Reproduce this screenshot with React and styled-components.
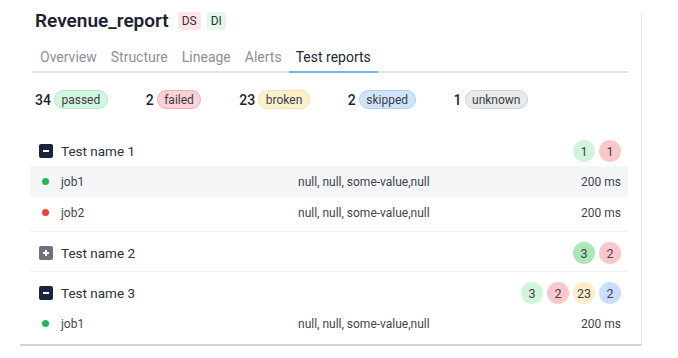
import React from "react";
import styled, { createGlobalStyle } from "styled-components";

const GlobalStyle = createGlobalStyle`
  body {
    margin: 0;
    background: #ffffff;
    font-family: Roboto, "Liberation Sans", sans-serif;
  }
`;

const Card = styled.div`
  box-sizing: border-box;
  width: 622px;
  margin: 12px 0 0 20px;
  padding: 0 13px 2px 10px;
  background: #fff;
  border-right: 1px solid #ececed;
  border-bottom: 2px solid #d3d4d6;
`;

const TitleRow = styled.div`
  display: flex;
  align-items: center;
  height: 18px;
  padding-left: 5px;
`;

const Title = styled.h1`
  margin: 0 9px 0 0;
  font-size: 19px;
  line-height: 18px;
  font-weight: 600;
  color: #1d2233;
`;

const Tag = styled.span`
  display: inline-flex;
  align-items: center;
  justify-content: center;
  height: 18px;
  padding: 0 4px;
  margin-right: 6px;
  border-radius: 3px;
  font-size: 12px;
  color: ${({ tone }) => (tone === "red" ? "#4a2a30" : "#26362d")};
  background: ${({ tone }) => (tone === "red" ? "#fde5e8" : "#e4f6ea")};
`;

const Tabs = styled.div`
  display: flex;
  margin: 12px 0 0 2px;
  border-bottom: 2px solid #e3e4e7;
`;

const Tab = styled.div`
  padding: 5px 7px 4px;
  font-size: 14px;
  line-height: 20px;
  color: ${({ active }) => (active ? "#222633" : "#8c909a")};
  border-bottom: 2px solid ${({ active }) => (active ? "#79b3ec" : "transparent")};
  margin-bottom: -2px;

  &:first-child {
    padding-left: 8px;
  }
`;

const Stats = styled.div`
  display: flex;
  gap: 38px;
  margin-top: 17px;
  padding-left: 5px;
`;

const Stat = styled.div`
  display: flex;
  align-items: center;
  gap: 3px;
`;

const StatNum = styled.span`
  font-size: 14px;
  font-weight: 500;
  color: #1f2435;
`;

const pill = {
  passed: ["#d3f5de", "#b4e9c4"],
  failed: ["#fcd2d5", "#f3aab0"],
  broken: ["#fdf0cc", "#f6e1a8"],
  skipped: ["#cfe4fb", "#add0f4"],
  unknown: ["#e9eaec", "#cfd1d5"],
};

const Pill = styled.span`
  box-sizing: border-box;
  height: 19px;
  padding: 0 6.5px;
  display: inline-flex;
  align-items: center;
  border-radius: 10px;
  font-size: 12px;
  color: #3a3e46;
  background: ${({ kind }) => pill[kind][0]};
  border: 1px solid ${({ kind }) => pill[kind][1]};
`;

const Groups = styled.div`
  margin-top: 27px;
`;

const Group = styled.div`
  padding-bottom: 3px;
  margin-bottom: 6px;
  border-bottom: 1px solid #eef0f2;

  &:last-child {
    border-bottom: 0;
    margin-bottom: 0;
  }
`;

const GroupHeader = styled.div`
  display: flex;
  align-items: center;
  height: 30px;
  padding: 0 7px 0 9px;
`;

const GroupName = styled.span`
  flex: 1;
  margin-left: 8px;
  font-size: 13.5px;
  color: #2b303b;
`;

const Counts = styled.div`
  display: flex;
  gap: 4px;
`;

const count = {
  green: "#d3f4dc",
  greenStrong: "#a9e7b7",
  red: "#fcc7cb",
  yellow: "#fdeec9",
  blue: "#c9defa",
};

const Count = styled.span`
  min-width: 22px;
  height: 22px;
  padding: 0 4px;
  box-sizing: border-box;
  display: inline-flex;
  align-items: center;
  justify-content: center;
  border-radius: 11px;
  font-size: 12.5px;
  color: #3e434c;
  background: ${({ tone }) => count[tone]};
`;

const JobRow = styled.div`
  display: grid;
  grid-template-columns: 256px 1fr auto;
  align-items: center;
  height: 31px;
  padding: 0 7px 0 12px;
  font-size: 12px;
  color: #3f4450;
  background: ${({ shaded }) => (shaded ? "#f3f5f7" : "transparent")};
`;

const JobName = styled.div`
  display: flex;
  align-items: center;
  gap: 12px;
`;

const Dot = styled.span`
  width: 7px;
  height: 7px;
  border-radius: 50%;
  background: ${({ ok }) => (ok ? "#1fba57" : "#f2412f")};
`;

function ToggleIcon({ open }) {
  return (
    <svg width="14" height="14" viewBox="0 0 14 14">
      <rect width="14" height="14" rx="2" fill={open ? "#1b2340" : "#6e727c"} />
      <rect x="4" y="6" width="6" height="2" fill="#fff" />
      {!open && <rect x="6" y="4" width="2" height="6" fill="#fff" />}
    </svg>
  );
}

const stats = [
  [34, "passed"],
  [2, "failed"],
  [23, "broken"],
  [2, "skipped"],
  [1, "unknown"],
];

const groups = [
  {
    name: "Test name 1",
    open: true,
    counts: [["green", 1], ["red", 1]],
    jobs: [
      { name: "job1", ok: true },
      { name: "job2", ok: false },
    ],
  },
  {
    name: "Test name 2",
    open: false,
    counts: [["greenStrong", 3], ["red", 2]],
    jobs: [],
  },
  {
    name: "Test name 3",
    open: true,
    counts: [["green", 3], ["red", 2], ["yellow", 23], ["blue", 2]],
    jobs: [{ name: "job1", ok: true }],
  },
];

export default function App() {
  return (
    <>
      <GlobalStyle />
      <Card>
        <TitleRow>
          <Title>Revenue_report</Title>
          <Tag tone="red">DS</Tag>
          <Tag tone="green">DI</Tag>
        </TitleRow>
        <Tabs>
          {["Overview", "Structure", "Lineage", "Alerts", "Test reports"].map((t) => (
            <Tab key={t} active={t === "Test reports"}>
              {t}
            </Tab>
          ))}
        </Tabs>
        <Stats>
          {stats.map(([n, k]) => (
            <Stat key={k}>
              <StatNum>{n}</StatNum>
              <Pill kind={k}>{k}</Pill>
            </Stat>
          ))}
        </Stats>
        <Groups>
          {groups.map((g) => (
            <Group key={g.name}>
              <GroupHeader>
                <ToggleIcon open={g.open} />
                <GroupName>{g.name}</GroupName>
                <Counts>
                  {g.counts.map(([tone, v], i) => (
                    <Count key={i} tone={tone}>
                      {v}
                    </Count>
                  ))}
                </Counts>
              </GroupHeader>
              {g.jobs.map((j, i) => (
                <JobRow key={j.name} shaded={g.name === "Test name 1" && i === 0}>
                  <JobName>
                    <Dot ok={j.ok} />
                    {j.name}
                  </JobName>
                  <span>null, null, some-value,null</span>
                  <span>200 ms</span>
                </JobRow>
              ))}
            </Group>
          ))}
        </Groups>
      </Card>
    </>
  );
}
